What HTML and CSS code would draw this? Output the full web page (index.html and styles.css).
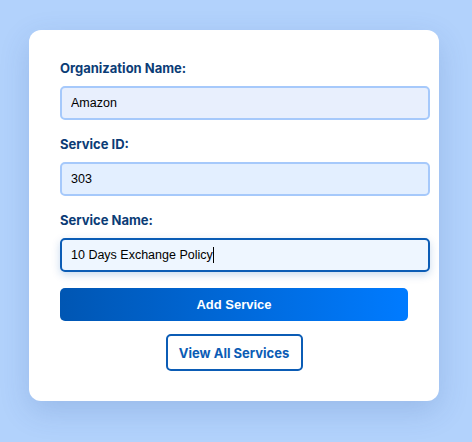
FILE: index.html
```html
<!DOCTYPE html>
<html>
<head>
<meta charset="utf-8">
<link rel="stylesheet" href="styles.css">
</head>
<body>
<div class="page">
  <form class="card">
    <div class="field">
      <label class="label" for="org">Organization Name:</label>
      <input class="input input-org" id="org" type="text" value="Amazon">
    </div>
    <div class="field">
      <label class="label" for="sid">Service ID:</label>
      <input class="input input-id" id="sid" type="text" value="303">
    </div>
    <div class="field">
      <label class="label" for="sname">Service Name:</label>
      <div class="input input-focus"><span class="value">10 Days Exchange Policy</span><span class="caret"></span></div>
    </div>
    <button class="btn-primary" type="button">Add Service</button>
    <div class="actions">
      <button class="btn-outline" type="button">View All Services</button>
    </div>
  </form>
</div>
</body>
</html>
```
FILE: styles.css
```css
html, body {
  margin: 0;
  padding: 0;
  background: #b2d2fc;
  height: 100%;
}
.page {
  padding: 30px 33px 41px 29px;
}
.card {
  width: 348px;
  padding: 30px 31px;
  background: #ffffff;
  border-radius: 12px;
  box-shadow: 0 10px 30px rgba(40, 80, 150, 0.18);
  display: flex;
  flex-direction: column;
}
.field {
  display: flex;
  flex-direction: column;
  margin-bottom: 16px;
}
.label {
  font-family: "Inter", "Noto Sans", sans-serif;
  font-weight: 700;
  font-size: 13px;
  line-height: 16px;
  color: #0b3c76;
  margin-bottom: 10px;
}
.input {
  box-sizing: border-box;
  width: 370px;
  height: 34px;
  padding: 0 9px;
  border: 2px solid #a6c9fb;
  border-radius: 5px;
  font-family: "Liberation Sans", Arial, sans-serif;
  font-size: 12.5px;
  color: #000;
  outline: none;
}
.input-org { background: #e8effd; }
.input-id { background: #e3efff; }
.input-focus {
  display: flex;
  align-items: center;
  background: #eef6ff;
  border-color: #0b5cb5;
  box-shadow: 0 3px 8px rgba(0, 86, 179, 0.22);
}
.caret {
  display: inline-block;
  width: 1px;
  height: 16px;
  background: #000;
}
.btn-primary {
  height: 33px;
  border: none;
  border-radius: 5px;
  background: linear-gradient(90deg, #0056b3, #007bff);
  color: #fff;
  font-family: "Liberation Sans", Arial, sans-serif;
  font-weight: 700;
  font-size: 13px;
  padding: 0;
}
.actions {
  display: flex;
  justify-content: center;
  margin-top: 13px;
}
.btn-outline {
  width: 137px;
  height: 37px;
  background: #fff;
  border: 2px solid #0b5cb5;
  border-radius: 5px;
  color: #0b5cb5;
  font-family: "Inter", "Noto Sans", sans-serif;
  font-weight: 700;
  font-size: 13px;
  padding: 0;
}
```
